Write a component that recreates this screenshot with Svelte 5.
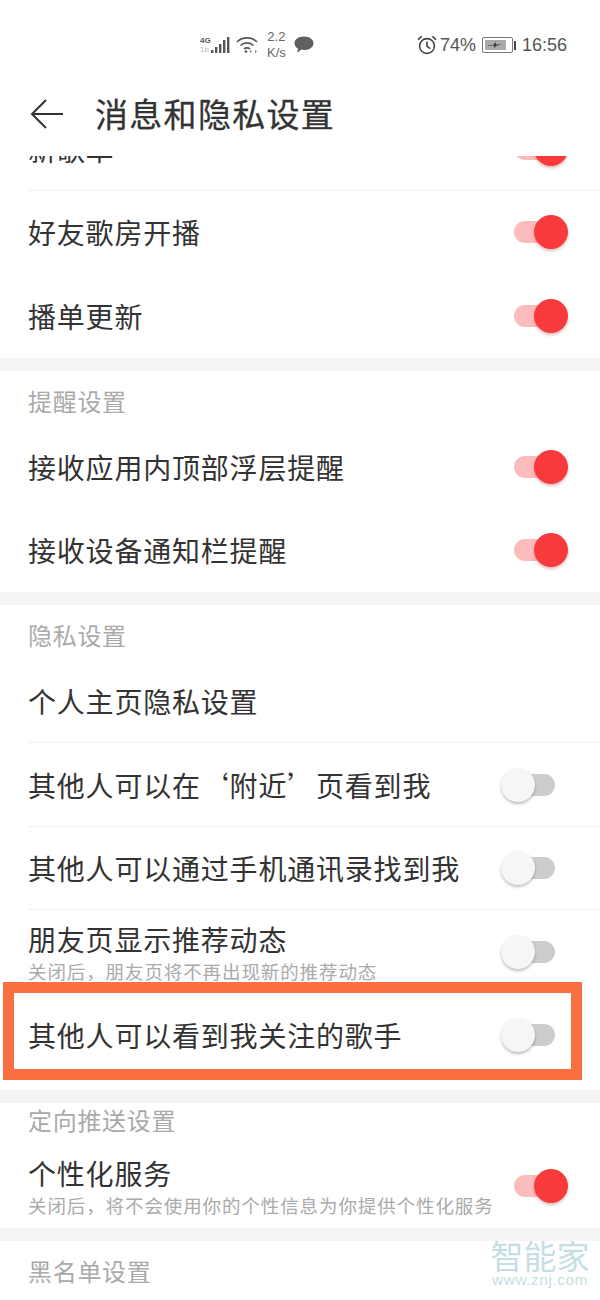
<script>
  const rows = [
    { kind: 'row', label: '新歌单', on: true, line: true },
    { kind: 'row', label: '好友歌房开播', on: true },
    { kind: 'row', label: '播单更新', on: true },
    { kind: 'band' },
    { kind: 'head', label: '提醒设置' },
    { kind: 'row', label: '接收应用内顶部浮层提醒', on: true },
    { kind: 'row', label: '接收设备通知栏提醒', on: true },
    { kind: 'band' },
    { kind: 'head', label: '隐私设置' },
    { kind: 'row', label: '个人主页隐私设置', line: true, noSwitch: true },
    { kind: 'row', label: '其他人可以在‘附近’页看到我', on: false, line: true },
    { kind: 'row', label: '其他人可以通过手机通讯录找到我', on: false, line: true },
    { kind: 'row', label: '朋友页显示推荐动态', sub: '关闭后，朋友页将不再出现新的推荐动态', on: false },
    { kind: 'row', label: '其他人可以看到我关注的歌手', on: false, tall: true },
    { kind: 'band' },
    { kind: 'head', label: '定向推送设置', short: true },
    { kind: 'row', label: '个性化服务', sub: '关闭后，将不会使用你的个性信息为你提供个性化服务', on: true },
    { kind: 'band' },
    { kind: 'head', label: '黑名单设置' }
  ];
</script>

<div class="page">
  <div class="status">
    <div class="left">
      <div class="net"><span>4G</span><span class="one">1b</span></div>
      <svg class="bars" width="20" height="18" viewBox="0 0 20 18">
        <rect x="0" y="14" width="2.4" height="3" /><rect x="4" y="11" width="2.4" height="6" /><rect x="8" y="8" width="2.4" height="9" /><rect x="12" y="4" width="2.4" height="13" /><rect x="16" y="1" width="2.4" height="16" />
      </svg>
      <svg class="wifi" width="22" height="18" viewBox="0 0 22 18" fill="none" stroke="#555" stroke-width="1.6">
        <path d="M1 6 C6 0.5 16 0.5 21 6" /><path d="M4.5 9.5 C8 6 14 6 17.5 9.5" /><path d="M8 13 C9.5 11.5 12.5 11.5 14 13" />
        <circle cx="10" cy="15.5" r="1.3" fill="#555" stroke="none" /><path d="M14 14 l2 1.5 -2 1.5 z M19 14 l2 1.5 -2 1.5 z" fill="#777" stroke="none" />
      </svg>
      <div class="speed"><span>2.2</span><span>K/s</span></div>
      <svg class="msg" width="20" height="18" viewBox="0 0 20 18">
        <path d="M10 0.5 C15.5 0.5 19.5 3.4 19.5 7.2 C19.5 11 15.5 14 10 14 C8.8 14 7.9 13.9 7 13.6 C6 15 4.4 16.3 2.6 16.6 C3.6 15.2 4 13.8 3.8 12.4 C1.8 11.2 0.5 9.4 0.5 7.2 C0.5 3.4 4.5 0.5 10 0.5 Z" fill="#606060" />
      </svg>
    </div>
    <div class="right">
      <svg class="alarm" width="20" height="20" viewBox="0 0 20 20" fill="none" stroke="#444" stroke-width="1.6">
        <circle cx="10" cy="11" r="7.4" /><path d="M10 6.5 V11.4 L13.4 13.6" /><path d="M1 4.6 L4.6 1.4 M19 4.6 L15.4 1.4" />
      </svg>
      <span class="pct">74%</span>
      <div class="battery"><div class="fill"><svg width="14" height="8" viewBox="0 0 14 8"><path d="M0 4 H5 L8 1 L7.6 3.4 H14 L9 4.6 L6 7 L6.4 4.6 H0Z" fill="#333" /></svg></div></div>
      <div class="cap"></div>
      <span class="time">16:56</span>
    </div>
  </div>

  <header class="bar">
    <svg class="back" width="34" height="30" viewBox="0 0 34 30" fill="none" stroke="#333" stroke-width="2">
      <path d="M16 1 L2 15 L16 29" /><path d="M2 15 H33" />
    </svg>
    <h1>消息和隐私设置</h1>
  </header>

  <div class="viewport">
    <div class="list">
      {#each rows as item}
        {#if item.kind === 'band'}
          <div class="band"></div>
        {:else if item.kind === 'head'}
          <div class="head" class:short={item.short}>{item.label}</div>
        {:else}
          <div class="row" class:tall={item.tall}>
            <div class="text">
              <div class="label">{item.label}</div>
              {#if item.sub}<div class="sub">{item.sub}</div>{/if}
            </div>
            {#if !item.noSwitch}
              <div class="switch" class:on={item.on}><span class="knob"></span></div>
            {/if}
            {#if item.line}<div class="line"></div>{/if}
          </div>
        {/if}
      {/each}
    </div>
  </div>

  <div class="highlight"></div>
  <div class="mark"><div class="cn">智能家</div><div class="en">www.znj.com</div></div>
</div>

<style>
  :global(body) {
    margin: 0;
    background: #fff;
  }
  .page {
    position: relative;
    width: 600px;
    height: 1300px;
    overflow: hidden;
    background: #fff;
    font-family: "Noto Sans CJK SC", "Noto Sans", sans-serif;
    color: #333;
  }
  .status {
    height: 72px;
    box-sizing: border-box;
    padding: 18px 33px 0 200px;
    display: flex;
    align-items: center;
    justify-content: space-between;
    font-family: "Liberation Sans", sans-serif;
    color: #555;
  }
  .left, .right {
    display: flex;
    align-items: center;
  }
  .net {
    display: flex;
    flex-direction: column;
    font-size: 8px;
    line-height: 9px;
    font-weight: 700;
    width: 11px;
  }
  .net .one { color: #bbb; font-weight: 400; }
  .bars { fill: #555; margin-right: 5px; }
  .wifi { margin-right: 9px; }
  .speed {
    display: flex;
    flex-direction: column;
    align-items: center;
    font-size: 13px;
    line-height: 16px;
    color: #666;
    margin-right: 8px;
  }
  .alarm { margin-right: 3px; }
  .pct { font-size: 18px; margin-right: 6px; }
  .battery {
    box-sizing: border-box;
    width: 31px;
    height: 16px;
    border: 1px solid #777;
    border-radius: 2px;
    padding: 2px;
  }
  .fill {
    width: 21px;
    height: 100%;
    background: #aaa;
    display: flex;
    align-items: center;
    justify-content: center;
  }
  .cap {
    width: 2px;
    height: 9px;
    background: #444;
    margin: 0 6px 0 1px;
  }
  .time { font-size: 18px; }

  .bar {
    height: 84px;
    display: flex;
    align-items: center;
    padding: 0 0 1px 30px;
    box-sizing: border-box;
  }
  .back { margin-right: 31px; }
  h1 {
    margin: 0;
    font-size: 33px;
    font-weight: 400;
    letter-spacing: 1.3px;
    color: #333;
    line-height: 1;
    -webkit-text-stroke: 0.3px #333;
  }
  .viewport {
    height: 1144px;
    overflow: hidden;
  }
  .list {
    margin-top: -49px;
  }
  .row {
    position: relative;
    height: 83.5px;
    display: flex;
    align-items: center;
    justify-content: space-between;
    padding: 0 45px 0 28px;
  }
  .row.tall { margin-bottom: 12.5px; }
  .label {
    font-size: 28px;
    letter-spacing: 0.8px;
    line-height: 36px;
    color: #333;
  }
  .sub {
    font-size: 18.5px;
    letter-spacing: 0.9px;
    line-height: 24px;
    color: #aaa;
    margin-top: 2px;
  }
  .line {
    position: absolute;
    left: 28px;
    right: 0;
    bottom: 0;
    height: 1px;
    background: #f0f0f0;
  }
  .band {
    height: 13px;
    background: #f4f4f4;
  }
  .head {
    height: 54.5px;
    box-sizing: border-box;
    padding: 5px 28px 0;
    display: flex;
    align-items: center;
    font-size: 24px;
    letter-spacing: 0.7px;
    color: #aaa;
  }
  .head.short { height: 42px; padding: 0 28px 9px; }
  .switch {
    position: relative;
    width: 52px;
    height: 22px;
    border-radius: 11px;
    background: #ccc;
  }
  .knob {
    position: absolute;
    left: -2px;
    top: -6px;
    width: 34px;
    height: 34px;
    border-radius: 50%;
    background: #f6f6f6;
    box-shadow: 0 2px 3px rgba(0, 0, 0, 0.25);
  }
  .switch.on { background: #fdbcbc; margin-right: -11px; }
  .switch.on .knob {
    left: auto;
    right: -2px;
    background: #f93a3d;
    box-shadow: 0 2px 3px rgba(150, 40, 40, 0.3);
  }
  .highlight {
    position: absolute;
    left: 3px;
    top: 982px;
    width: 579px;
    height: 98px;
    box-sizing: border-box;
    border: 11px solid #fa7040;
  }
  .mark {
    position: absolute;
    left: 490px;
    top: 1238px;
    width: 100px;
    color: #c4dfe3;
    text-align: center;
  }
  .cn {
    font-size: 33px;
    line-height: 34px;
  }
  .en {
    font-family: "Liberation Sans", sans-serif;
    font-size: 15.5px;
    line-height: 16px;
    letter-spacing: 0.5px;
    white-space: nowrap;
  }
</style>
